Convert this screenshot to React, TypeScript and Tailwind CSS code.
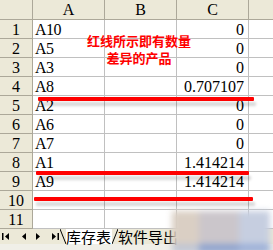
const rows: [string, string][] = [
  ["A10", "0"],
  ["A5", "0"],
  ["A3", "0"],
  ["A8", "0.707107"],
  ["A2", "0"],
  ["A6", "0"],
  ["A7", "0"],
  ["A1", "1.414214"],
  ["A9", "1.414214"],
  ["", ""],
  ["", ""],
];

function RedLine({ left, top, width }: { left: number; top: number; width: number }) {
  return (
    <div
      className="absolute h-[4px] rounded-[1px] bg-[#ff0000] shadow-[2px_5px_3px_rgba(0,0,0,0.16)]"
      style={{ left, top, width }}
    />
  );
}

function Arrow({ dir, bar }: { dir: "l" | "r"; bar?: boolean }) {
  return (
    <svg width="8" height="7" viewBox="0 0 8 7" className="block">
      {dir === "l" ? (
        <>
          {bar && <rect x="0" y="0" width="1.5" height="7" fill="#000" />}
          <polygon points="7,0 7,7 3,3.5" fill="#000" />
        </>
      ) : (
        <>
          <polygon points="1,0 1,7 5,3.5" fill="#000" />
          {bar && <rect x="6.5" y="0" width="1.5" height="7" fill="#000" />}
        </>
      )}
    </svg>
  );
}

export default function App() {
  return (
    <div className="relative w-[273px] h-[250px] overflow-hidden bg-white text-black font-['Liberation_Serif',serif]">
      {/* sheet grid */}
      <div className="grid grid-cols-[33px_72px_72px_72px_1fr] text-[16px]">
        <div className="h-[20px] bg-[#ece9d8] border-r border-b border-[#aca899]" />
        {["A", "B", "C"].map((c) => (
          <div
            key={c}
            className="h-[20px] bg-[#ece9d8] border-r border-b border-[#aca899] flex items-center justify-center leading-none"
          >
            {c}
          </div>
        ))}
        <div className="h-[20px] bg-[#ece9d8] border-b border-[#aca899]" />

        {rows.map(([a, c], i) => (
          <div key={i} className="contents">
            <div className="h-[19px] bg-[#ece9d8] border-r border-b border-[#aca899] flex items-center justify-center leading-none pt-[2px]">
              {i + 1}
            </div>
            <div className="h-[19px] border-r border-b border-[#c0c0c0] flex items-center pl-[2px] leading-none pt-[2px] tracking-[-0.5px]">
              {a}
            </div>
            <div className="h-[19px] border-r border-b border-[#c0c0c0]" />
            <div className="h-[19px] border-r border-b border-[#c0c0c0] flex items-center justify-end pr-[4px] leading-none pt-[2px]">
              {c}
            </div>
            <div className="h-[19px] border-b border-[#c0c0c0]" />
          </div>
        ))}
      </div>

      {/* sheet tabs */}
      <div className="flex h-[15px] items-stretch bg-[#ece9d8]">
        <div className="flex items-center w-[60px] pl-[2px]">
          <Arrow dir="l" bar />
          <div className="ml-[9px]">
            <Arrow dir="l" />
          </div>
          <div className="ml-[8px]">
            <Arrow dir="r" />
          </div>
          <div className="ml-[8px]">
            <Arrow dir="r" bar />
          </div>
        </div>
        <div className="flex items-stretch text-[15px] leading-none font-['Noto_Sans_CJK_SC',sans-serif]">
          <svg width="6" height="15" viewBox="0 0 6 15" className="block">
            <line x1="0" y1="0" x2="6" y2="15" stroke="#000" strokeWidth="1" />
          </svg>
          <div className="bg-white flex items-center pr-[1px]">库存表</div>
          <svg width="6" height="15" viewBox="0 0 6 15" className="block">
            <line x1="6" y1="0" x2="0" y2="15" stroke="#000" strokeWidth="1" />
          </svg>
          <div className="flex items-center">软件导出</div>
        </div>
      </div>
      <div className="h-[7px] bg-[#f0efe8]" />

      {/* annotation */}
      <div className="absolute left-[74px] top-[33px] w-[130px] flex flex-col items-center gap-[1px] text-[13px] font-bold leading-[16px] text-[#ff0000] font-['Noto_Sans_CJK_SC',sans-serif]">
        <span>红线所示即有数量</span>
        <span>差异的产品</span>
      </div>

      <RedLine left={38} top={97} width={216} />
      <RedLine left={36} top={171} width={213} />
      <RedLine left={34} top={197} width={219} />

      {/* blurred corner */}
      <div className="absolute left-[172px] top-[211px] w-[98px] h-[42px] blur-[3px] flex flex-col">
        <div className="flex flex-1">
          <div className="w-[27px] bg-[#dacfc4]" />
          <div className="w-[40px] bg-[#cbc6cb]" />
          <div className="flex-1 bg-[#c6cee0]" />
        </div>
        <div className="flex h-[9px]">
          <div className="w-[27px] bg-[#c0c6d4]" />
          <div className="w-[40px] bg-[#8ea3cf]" />
          <div className="flex-1 bg-[#9cb0d8]" />
        </div>
      </div>
    </div>
  );
}
